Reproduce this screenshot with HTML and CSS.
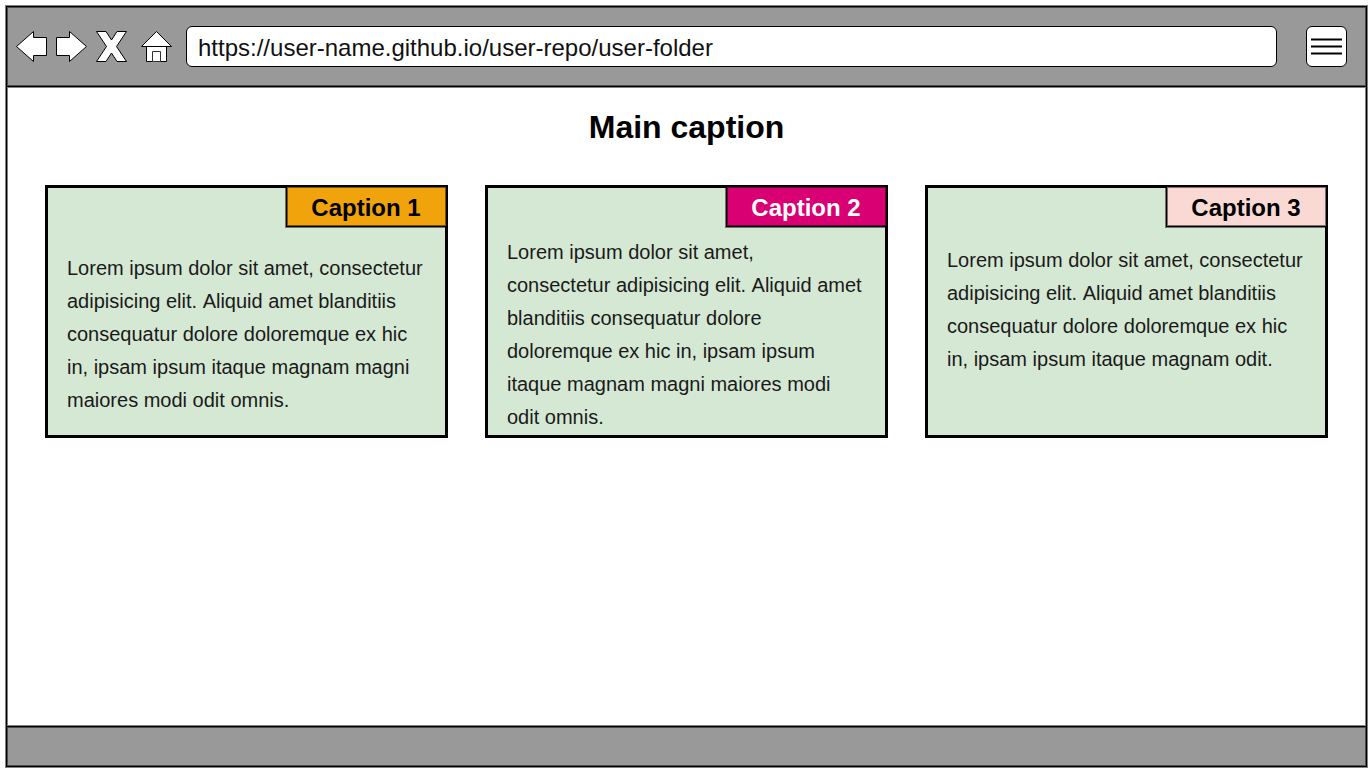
FILE: index.html
```html
<!DOCTYPE html>
<html lang="en">
<head>
  <meta charset="utf-8">
  <title>Main caption</title>
  <link rel="stylesheet" href="styles.css">
</head>
<body>
  <div class="browser">
    <header class="toolbar">
      <nav class="nav" aria-label="Browser">
        <button class="nav-button" type="button" aria-label="Back">
          <svg class="icon" viewBox="0 0 31 31"><path d="M.5 15.5 17.5.5v6h13v18h-13v6z"/></svg>
        </button>
        <button class="nav-button" type="button" aria-label="Forward">
          <svg class="icon" viewBox="0 0 31 31"><path d="M30.5 15.5 13.5.5v6H.5v18h13v6z"/></svg>
        </button>
        <button class="nav-button" type="button" aria-label="Stop">
          <svg class="icon" viewBox="0 0 31 31"><path d="M.5.5H10L15.500 9 21 .5H30.500L20.500 15.500 30.500 30.500H21L15.500 22 10 30.500H.5L10.500 15.500z"/></svg>
        </button>
        <button class="nav-button nav-button-home" type="button" aria-label="Home">
          <svg class="icon" viewBox="0 0 31 31"><path d="M5.500 15.500H25.500V30.500H5.500z"/><path d="M15.500.5 30.500 15.500H.5z"/><path class="door" d="M11.500 20.500H19.500V30.500H11.500z"/></svg>
        </button>
      </nav>
      <input class="address" type="text" aria-label="Address" value="https://user-name.github.io/user-repo/user-folder">
      <button class="menu" type="button" aria-label="Menu">
        <span class="menu-line"></span>
        <span class="menu-line"></span>
        <span class="menu-line"></span>
      </button>
    </header>
    <main class="content">
      <h1 class="title">Main caption</h1>
      <div class="cards">
        <section class="card card-low">
          <h2 class="tag tag-orange">Caption 1</h2>
          <p class="text">Lorem ipsum dolor sit amet, consectetur adipisicing elit. Aliquid amet blanditiis consequatur dolore doloremque ex hic in, ipsam ipsum itaque magnam magni maiores modi odit omnis.</p>
        </section>
        <section class="card card-high">
          <h2 class="tag tag-pink">Caption 2</h2>
          <p class="text">Lorem ipsum dolor sit amet,<br>consectetur adipisicing elit. Aliquid amet blanditiis consequatur dolore doloremque ex hic in, ipsam ipsum itaque magnam magni maiores modi odit omnis.</p>
        </section>
        <section class="card card-middle">
          <h2 class="tag tag-rose">Caption 3</h2>
          <p class="text">Lorem ipsum dolor sit amet, consectetur adipisicing elit. Aliquid amet blanditiis consequatur dolore doloremque ex hic in, ipsam ipsum itaque magnam odit.</p>
        </section>
      </div>
    </main>
    <footer class="statusbar"></footer>
  </div>
</body>
</html>
```
FILE: styles.css
```css
* {
  box-sizing: border-box;
}

body {
  margin: 0;
  padding: 6px 5px 6px 6px;
  min-height: 100vh;
  display: flex;
  background: #fff;
  color: #000;
  font-family: "Liberation Sans", Arial, sans-serif;
}

.browser {
  flex: 1;
  display: flex;
  flex-direction: column;
  border: 1px solid #000;
  box-shadow: 0 0 0 1px #808080;
}

.toolbar {
  display: flex;
  align-items: center;
  padding: 19px 19px 19px 9px;
  background: #999;
  border-bottom: 1px solid #000;
  box-shadow: inset 0 0 0 1px #4c4c4c;
}

.nav {
  display: flex;
  gap: 9px;
}

.nav-button {
  display: block;
  padding: 0;
  border: 0;
  background: none;
}

.nav-button-home {
  margin-left: 5px;
}

.icon {
  display: block;
  width: 31px;
  height: 31px;
  fill: #fff;
  stroke: #000;
  stroke-width: 1;
}

.door {
  stroke: #333;
}

.address {
  flex: 1;
  min-width: 0;
  height: 41px;
  margin: 0 29px 0 14px;
  padding: 2px 11px 0;
  border: 1px solid #000;
  border-radius: 6px;
  background: #fff;
  color: #111;
  font: 24px "Liberation Sans", Arial, sans-serif;
}

.menu {
  display: flex;
  flex-direction: column;
  justify-content: center;
  gap: 4px;
  width: 41px;
  height: 41px;
  padding: 0 4px;
  border: 1px solid #000;
  border-radius: 6px;
  background: #fff;
}

.menu-line {
  height: 3px;
  border: solid #808080;
  border-width: 1px 0;
  background: #000;
}

.content {
  flex: 1;
  padding: 20px 38px;
  box-shadow: inset 0 0 0 1px #808080;
}

.title {
  margin: 0 0 38px;
  font-size: 32px;
  line-height: 40px;
  text-align: center;
}

.cards {
  display: grid;
  grid-template-columns: repeat(3, 1fr);
  gap: 37px;
}

.card {
  position: relative;
  min-height: 253px;
  padding: 0 19px;
  border: 3px solid #000;
  background: #d5e8d4;
}

.card-low {
  padding-top: 64px;
}

.card-middle {
  padding-top: 56px;
}

.card-high {
  padding-top: 48px;
}

.tag {
  position: absolute;
  top: -2px;
  right: -2px;
  width: 161px;
  margin: 0;
  padding-right: 1px;
  border: 1px solid #000;
  box-shadow: inset 0 0 0 1px rgba(0, 0, 0, 0.5), -1px 1px 0 rgba(0, 0, 0, 0.5);
  font-size: 24px;
  line-height: 39px;
  padding-top: 1px;
  height: 41px;
  text-align: center;
}

.tag-orange {
  background: #f0a30a;
}

.tag-pink {
  background: #d80073;
  color: #fff;
}

.tag-rose {
  background: #fad9d5;
}

.text {
  margin: 0;
  color: #1a1a1a;
  font-size: 20px;
  line-height: 33px;
  font-kerning: none;
}

.statusbar {
  height: 40px;
  background: #999;
  border-top: 1px solid #000;
  box-shadow: inset 0 0 0 1px #4c4c4c;
}
```
